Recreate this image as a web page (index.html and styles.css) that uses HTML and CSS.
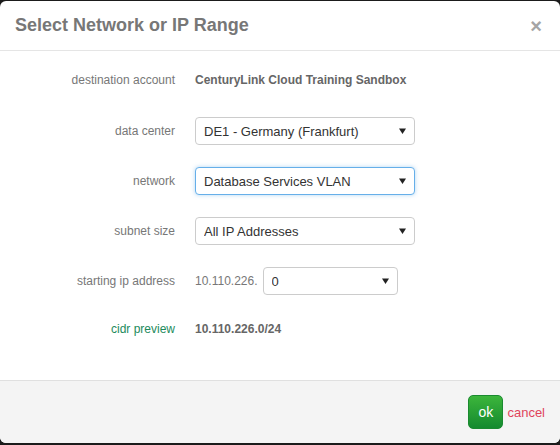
FILE: index.html
```html
<!DOCTYPE html>
<html>
<head>
<meta charset="utf-8">
<link rel="stylesheet" href="styles.css">
</head>
<body>
<div class="modal">
  <div class="modal-header">
    <h4 class="title">Select Network or IP Range</h4>
    <span class="close">×</span>
  </div>
  <div class="modal-body">
    <div class="row row-first">
      <div class="label">destination account</div>
      <div class="value strong">CenturyLink Cloud Training Sandbox</div>
    </div>
    <div class="row">
      <div class="label">data center</div>
      <div class="value"><select class="select"><option>DE1 - Germany (Frankfurt)</option></select></div>
    </div>
    <div class="row">
      <div class="label">network</div>
      <div class="value"><select class="select focused"><option>Database Services VLAN</option></select></div>
    </div>
    <div class="row">
      <div class="label">subnet size</div>
      <div class="value"><select class="select"><option>All IP Addresses</option></select></div>
    </div>
    <div class="row row-ip">
      <div class="label">starting ip address</div>
      <div class="value ip"><span class="prefix">10.110.226.</span><select class="select small"><option>0</option></select></div>
    </div>
    <div class="row">
      <div class="label green">cidr preview</div>
      <div class="value strong">10.110.226.0/24</div>
    </div>
  </div>
  <div class="modal-footer">
    <button class="btn-ok">ok</button>
    <a class="cancel">cancel</a>
  </div>
</div>
</body>
</html>
```
FILE: styles.css
```css
html, body {
  margin: 0;
  padding: 0;
  background: #1b1b1b;
  height: 100%;
}
body {
  font-family: "Liberation Sans", Arial, sans-serif;
  overflow: hidden;
}
.modal {
  margin-top: 1px;
  height: 442px;
  background: #fff;
  border-radius: 6px;
  overflow: hidden;
  display: flex;
  flex-direction: column;
}
.modal-header {
  display: flex;
  justify-content: space-between;
  align-items: flex-start;
  padding: 14px 15px 14px 15px;
  border-bottom: 1px solid #e5e5e5;
}
.title {
  margin: 0;
  font-size: 18px;
  line-height: 20px;
  font-weight: bold;
  color: #777;
}
.close {
  font-size: 20px;
  line-height: 20px;
  font-weight: bold;
  color: #a5a5a5;
  margin-top: 1px;
  margin-right: 3px;
}
.modal-body {
  flex: 1;
  padding-top: 15px;
}
.row {
  display: grid;
  grid-template-columns: 175px 1fr;
  column-gap: 20px;
  align-items: center;
  height: 28px;
  margin-bottom: 22px;
}
.row-first {
  margin-bottom: 23px;
}
.row-ip {
  margin-bottom: 20px;
}
.label {
  text-align: right;
  font-size: 12px;
  color: #777;
}
.label.green {
  color: #1d8a5c;
}
.value {
  font-size: 12px;
  color: #777;
}
.strong {
  font-weight: bold;
  color: #666;
}
.ip {
  display: flex;
  align-items: center;
  gap: 5px;
}
.prefix {
  font-size: 12px;
  color: #777;
}
.select {
  -webkit-appearance: none;
  appearance: none;
  width: 220px;
  height: 28px;
  box-sizing: border-box;
  border: 1px solid #ccc;
  border-radius: 4px;
  background: #fff url("data:image/svg+xml;utf8,<svg xmlns='http://www.w3.org/2000/svg' width='7' height='6'><path d='M0 0.5 H7 L3.5 6 Z' fill='%23222'/></svg>") no-repeat right 8px center;
  padding: 0 20px 0 8px;
  font-family: "Liberation Sans", Arial, sans-serif;
  font-size: 13px;
  color: #333;
  outline: none;
  margin: 0;
}
.select.focused {
  border-color: #66afe9;
  box-shadow: 0 0 4px rgba(102, 175, 233, 0.5);
}
.select.small {
  width: 135px;
  height: 28px;
}
.modal-footer {
  border-top: 1px solid #e0e0e0;
  background: #f4f4f4;
  height: 63px;
  box-sizing: border-box;
  display: flex;
  align-items: center;
  justify-content: flex-end;
  padding: 0 15px 0 0;
  gap: 4px;
}
.btn-ok {
  width: 35px;
  height: 34px;
  border: 1px solid #1a8a30;
  border-radius: 5px;
  background: linear-gradient(#3cb53b, #148a2f);
  color: #fff;
  font-family: "Liberation Sans", Arial, sans-serif;
  font-size: 14px;
  padding: 0;
}
.cancel {
  color: #e0445c;
  font-size: 13px;
}
```
